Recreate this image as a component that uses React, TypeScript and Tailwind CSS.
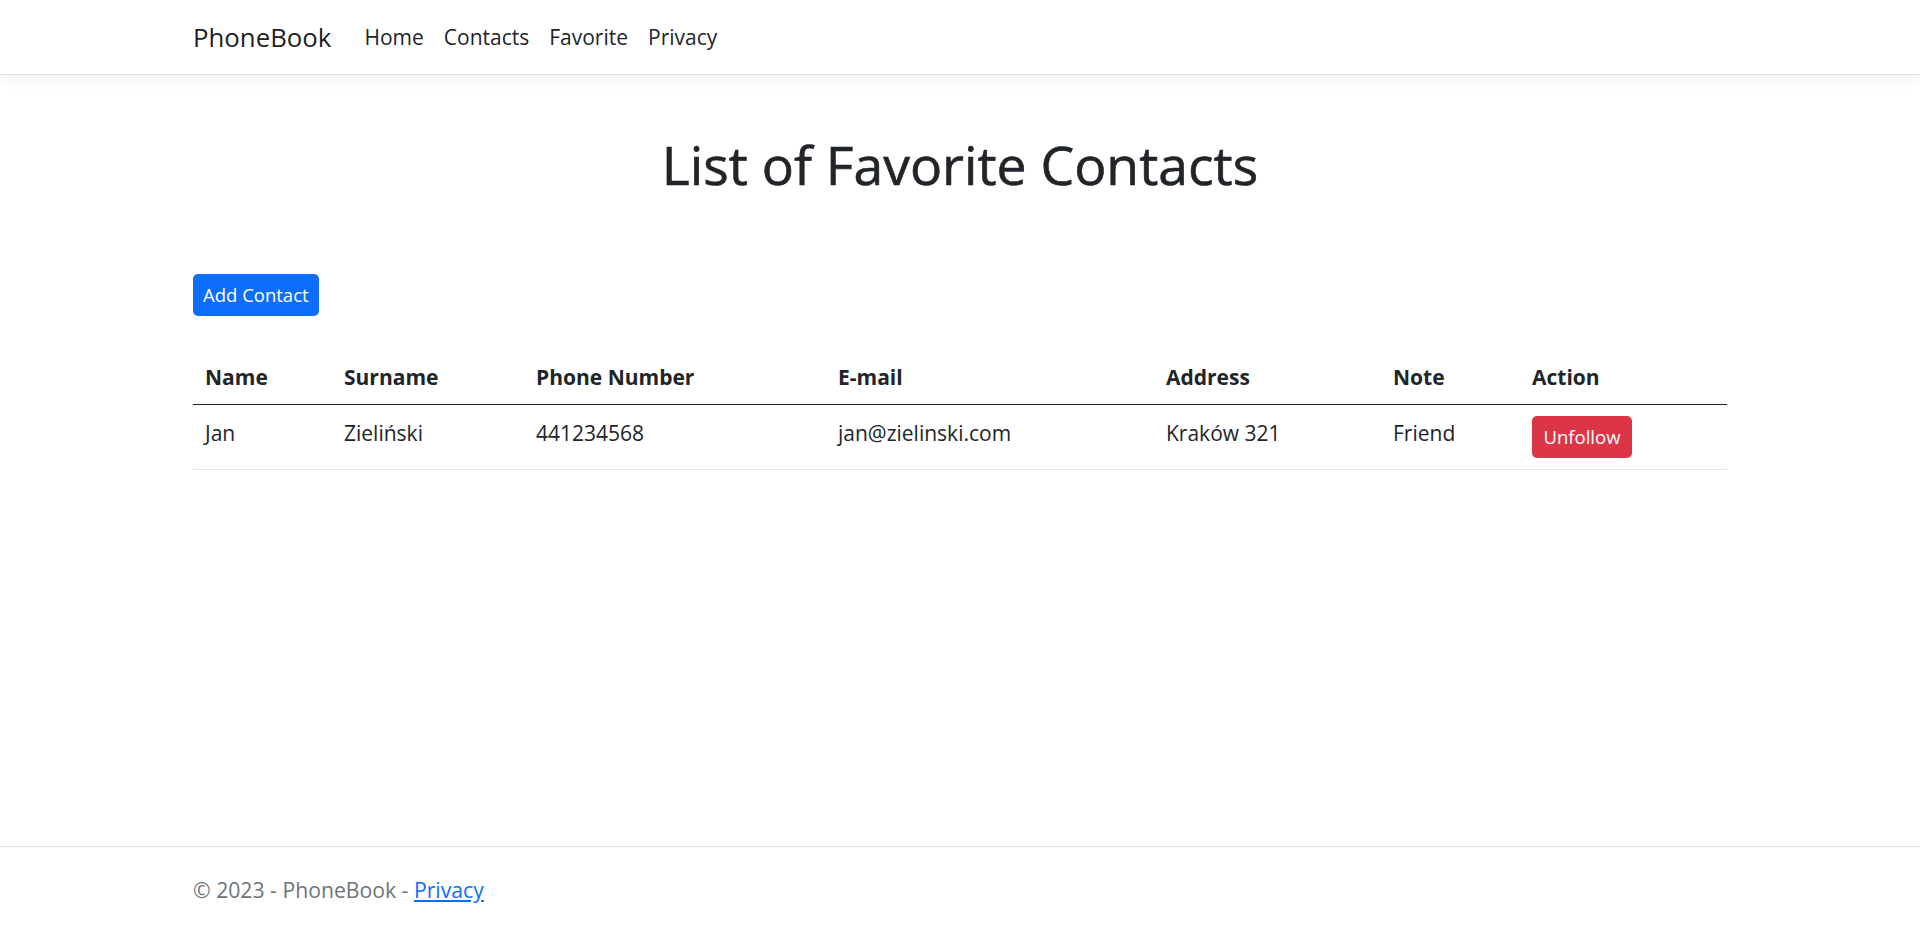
import React from "react";

const font = { fontFamily: '"Open Sans", "Noto Sans", "Liberation Sans", sans-serif' };

export default function App() {
  const cols = [
    { label: "Name", w: "w-[139px]" },
    { label: "Surname", w: "w-[192px]" },
    { label: "Phone Number", w: "w-[302px]" },
    { label: "E-mail", w: "w-[328px]" },
    { label: "Address", w: "w-[227px]" },
    { label: "Note", w: "w-[139px]" },
    { label: "Action", w: "w-[207px]" },
  ];
  return (
    <div className="min-h-screen flex flex-col bg-white text-[#212529]" style={font}>
      <nav className="h-[75px] bg-white border-b border-[#dee2e6] shadow-[0_5px_15px_rgba(0,0,0,0.05)] relative z-10">
        <div className="max-w-[1534px] mx-auto h-full flex items-center pt-[2px]">
          <a className="text-[25.8px] text-black/90 mr-[23px] leading-none">PhoneBook</a>
          <ul className="flex items-center text-[21px] text-[#212529]">
            <li className="px-[10px]">Home</li>
            <li className="px-[10px]">Contacts</li>
            <li className="px-[10px]">Favorite</li>
            <li className="px-[10px]">Privacy</li>
          </ul>
        </div>
      </nav>
      <main className="flex-1">
        <div className="max-w-[1534px] mx-auto">
          <h1 className="text-center text-[53.5px] leading-[67px] mt-[56px] mb-[3px] font-normal [-webkit-text-stroke:0.6px_#212529]">
            List of Favorite Contacts
          </h1>
          <button className="mt-[73px] h-[42px] px-[10px] bg-[#0d6efd] text-white text-[18.5px] rounded-[5px] leading-none">
            Add Contact
          </button>
          <table className="mt-[38px] w-full table-fixed border-collapse text-[21px]">
            <thead>
              <tr className="border-b border-[#212529]">
                {cols.map((c) => (
                  <th key={c.label} className={`${c.w} text-left font-bold px-[12px] pt-[8px] pb-[12px] leading-[30px]`}>
                    {c.label}
                  </th>
                ))}
              </tr>
            </thead>
            <tbody>
              <tr className="border-b border-[#dee2e6]">
                <td className="px-[12px] pt-[13px] pb-[11px] align-top leading-[30px]">Jan</td>
                <td className="px-[12px] pt-[13px] pb-[11px] align-top leading-[30px]">Zieliński</td>
                <td className="px-[12px] pt-[13px] pb-[11px] align-top leading-[30px]">441234568</td>
                <td className="px-[12px] pt-[13px] pb-[11px] align-top leading-[30px]">jan@zielinski.com</td>
                <td className="px-[12px] pt-[13px] pb-[11px] align-top leading-[30px]">Kraków 321</td>
                <td className="px-[12px] pt-[13px] pb-[11px] align-top leading-[30px]">Friend</td>
                <td className="px-[12px] pt-[11px] pb-[11px] align-top">
                  <button className="h-[42px] w-[100px] bg-[#dc3545] text-white text-[18.5px] rounded-[5px] leading-none">
                    Unfollow
                  </button>
                </td>
              </tr>
            </tbody>
          </table>
        </div>
      </main>
      <footer className="border-t border-[#dee2e6] h-[80px]">
        <div className="max-w-[1534px] mx-auto h-full flex items-center pt-[7px] text-[21.2px] text-[#6c757d]">
          <span>
            © 2023 - PhoneBook - <a className="text-[#0d6efd] underline">Privacy</a>
          </span>
        </div>
      </footer>
    </div>
  );
}
